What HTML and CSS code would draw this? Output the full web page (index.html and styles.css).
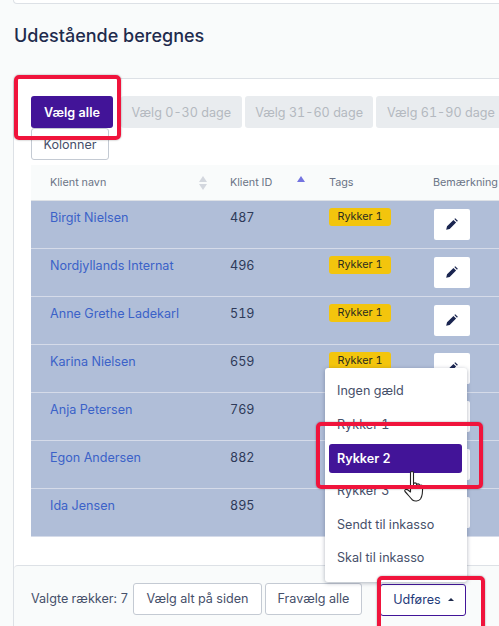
FILE: index.html

```html
<!DOCTYPE html>
<html lang="da">
<head>
  <meta charset="UTF-8" />
  <meta name="viewport" content="width=device-width, initial-scale=1" />
  <title>Udestående beregnes</title>
  <link rel="stylesheet" href="styles.css">
</head>
<body>
  <div class="top-card"></div>
  <h1>Udestående beregnes</h1>

  <div class="card">
    <div class="toolbar">
      <div class="toolbar-row">
        <button class="btn btn-primary">Vælg alle</button>
        <button class="btn btn-disabled">Vælg 0-30 dage</button>
        <button class="btn btn-disabled">Vælg 31-60 dage</button>
        <button class="btn btn-disabled">Vælg 61-90 dage</button>
      </div>
      <button class="btn btn-outline">Kolonner</button>
    </div>

    <table class="tbl">
      <thead>
        <tr>
          <th class="col-name">Klient navn<span class="sort"><i class="up"></i><i class="down"></i></span></th>
          <th class="col-id">Klient ID<span class="sort sort-asc"><i class="up"></i></span></th>
          <th class="col-tags">Tags</th>
          <th class="col-note">Bemærkning</th>
        </tr>
      </thead>
      <tbody>
        <tr>
          <td><a href="#">Birgit Nielsen</a></td><td>487</td><td><span class="tag">Rykker 1</span></td>
          <td><span class="edit"><svg viewBox="0 0 24 24"><path d="M2 22l1.500-6L14.500 5l4.500 4.500L8 20.500zM16 3.500L17.500 2 22 6.500 20.500 8z"/></svg></span></td>
        </tr>
        <tr>
          <td><a href="#">Nordjyllands Internat</a></td><td>496</td><td><span class="tag">Rykker 1</span></td>
          <td><span class="edit"><svg viewBox="0 0 24 24"><path d="M2 22l1.500-6L14.500 5l4.500 4.500L8 20.500zM16 3.500L17.500 2 22 6.500 20.500 8z"/></svg></span></td>
        </tr>
        <tr>
          <td><a href="#">Anne Grethe Ladekarl</a></td><td>519</td><td><span class="tag">Rykker 1</span></td>
          <td><span class="edit"><svg viewBox="0 0 24 24"><path d="M2 22l1.500-6L14.500 5l4.500 4.500L8 20.500zM16 3.500L17.500 2 22 6.500 20.500 8z"/></svg></span></td>
        </tr>
        <tr>
          <td><a href="#">Karina Nielsen</a></td><td>659</td><td><span class="tag">Rykker 1</span></td>
          <td><span class="edit"><svg viewBox="0 0 24 24"><path d="M2 22l1.500-6L14.500 5l4.500 4.500L8 20.500zM16 3.500L17.500 2 22 6.500 20.500 8z"/></svg></span></td>
        </tr>
        <tr>
          <td><a href="#">Anja Petersen</a></td><td>769</td><td></td>
          <td><span class="edit"></span></td>
        </tr>
        <tr>
          <td><a href="#">Egon Andersen</a></td><td>882</td><td></td>
          <td><span class="edit"></span></td>
        </tr>
        <tr>
          <td><a href="#">Ida Jensen</a></td><td>895</td><td></td>
          <td><span class="edit"></span></td>
        </tr>
      </tbody>
    </table>

    <div class="footer">
      <span class="count">Valgte rækker: 7</span>
      <button class="btn btn-outline">Vælg alt på siden</button>
      <button class="btn btn-outline">Fravælg alle</button>
      <button class="btn btn-action">Udføres<i class="caret"></i></button>
    </div>
  </div>

  <ul class="menu">
    <li>Ingen gæld</li>
    <li>Rykker 1</li>
    <li class="active">Rykker 2</li>
    <li>Rykker 3</li>
    <li>Sendt til inkasso</li>
    <li>Skal til inkasso</li>
  </ul>

  <svg class="hand" viewBox="0 0 24 34">
    <path d="M6.500 3c0-2 3-2 3 0v11c0-1.500 3-1.500 3 0v1c0-1.500 3-1.500 3 0v1c0-1.300 3-1.300 3 0 .3 5 .5 9-2 13-2 2.500-6 2.500-8 1-2.500-2.500-5-6-7.500-8.500-1-1.500 1-3 3-1.500l2.500 2z" fill="#fff" stroke="#222" stroke-width="1.100" stroke-linejoin="round"/>
    <path d="M9.500 14v4M12.500 15v3M15.500 16v2" fill="none" stroke="#222" stroke-width="1"/>
  </svg>

  <!-- markup on top of the screenshot -->
  <div class="mark mark-all"></div>
  <div class="mark mark-item"></div>
  <div class="mark mark-action"></div>
</body>
</html>
```

FILE: styles.css

```css
html, body {
  height: 100%;
}
body {
  font-family: Inter, "Liberation Sans", sans-serif;
  font-variant-numeric: tabular-nums;
  background: #f9fbfb;
  margin: 0;
  padding: 0 0 0 13px;
  box-sizing: border-box;
  color: #2e3a59;
  font-size: 12.6px;
  overflow: hidden;
  position: relative;
}
.top-card {
  height: 3px;
  width: 600px;
  background: #fff;
  border: 1px solid #dde1e6;
  border-top: none;
  border-radius: 0 0 4px 4px;
}
h1 {
  font-size: 18px;
  font-weight: 500;
  color: #1f2b4d;
  margin: 20px 0 0 1px;
  line-height: 24px;
}
.card {
  margin-top: 30px;
  width: 700px;
  height: 560px;
  background: #fff;
  border: 1px solid #dde1e6;
  border-radius: 4px 0 0 0;
}
.toolbar {
  padding: 17px 0 0 17px;
  height: 70px;
}
.toolbar-row {
  display: flex;
  gap: 3px;
}
.btn {
  font-family: inherit;
  font-variant-numeric: inherit;
  font-size: 12.6px;
  height: 32px;
  padding: 0 9.500px;
  border-radius: 3px;
  border: 1px solid transparent;
  box-sizing: border-box;
  white-space: nowrap;
  flex-shrink: 0;
}
.btn-primary {
  background: #421498;
  color: #fff;
  font-weight: 600;
  width: 82px;
  padding: 0;
  margin-right: 5px;
}
.btn-disabled {
  background: #e9ecef;
  color: #b4b9c0;
}
.btn-outline {
  background: #fff;
  border-color: #c4cad3;
  color: #46506a;
}
.toolbar .btn-outline {
  display: block;
  width: 78px;
  padding: 0;
}
.tbl {
  border-collapse: collapse;
  table-layout: fixed;
  width: 660px;
  margin: -1px 0 0 17px;
}
.tbl th {
  height: 35px;
  box-sizing: border-box;
  background: #f9fbfb;
  border-bottom: 1px solid #dde1e6;
  font-weight: 400;
  font-size: 10.8px;
  color: #6b7486;
  text-align: left;
  padding: 0;
  position: relative;
}
.col-name { width: 199px; padding-left: 19px !important; }
.col-id { width: 99px; }
.col-tags { width: 104px; }
.tbl td {
  height: 48px;
  box-sizing: border-box;
  background: #b0bed8;
  border-bottom: 1px solid #d5dbe9;
  padding: 7px 0 0;
  vertical-align: top;
  line-height: 20px;
}
.tbl td:first-child {
  padding-left: 19px;
}
.tbl a {
  color: #3b62c8;
  text-decoration: none;
}
.sort {
  position: absolute;
  top: 11px;
  left: 168px;
  display: flex;
  flex-direction: column;
  gap: 2px;
}
.sort-asc {
  left: 67px;
}
.sort i {
  display: block;
  width: 0;
  height: 0;
  border-left: 4px solid transparent;
  border-right: 4px solid transparent;
}
.sort .up {
  border-bottom: 6px solid #d3d7de;
}
.sort .down {
  border-top: 6px solid #d3d7de;
}
.sort-asc .up {
  border-bottom-color: #7474e0;
}
.tag {
  display: block;
  width: 62px;
  text-align: center;
  background: #f3c50d;
  color: #2b2b20;
  font-size: 10.8px;
  font-weight: 400;
  line-height: 18px;
  border-radius: 3px;
}
.edit {
  display: flex;
  align-items: center;
  justify-content: center;
  width: 36px;
  height: 31px;
  margin: 1px 0 0 1px;
  background: #fff;
  border-radius: 2px;
}
.edit svg {
  width: 14px;
  height: 14px;
  fill: #1a2550;
}
.footer {
  margin-top: 28px;
  height: 80px;
  background: #f9fbfb;
  border-top: 1px solid #dde1e6;
  border-radius: 4px 0 0 0;
  padding: 17px 0 0 17px;
  display: flex;
  align-items: flex-start;
  gap: 3px;
}
.count {
  line-height: 32px;
  color: #46506a;
  margin-right: 2px;
}
.footer .btn-outline {
  padding: 0 12px;
}
.footer .btn-action {
  margin: 1px 0 0 15px;
  width: 86px;
  padding: 0;
  background: #fff;
  border: 1px solid #421498;
  color: #1f3a7a;
  display: flex;
  align-items: center;
  justify-content: center;
  gap: 7px;
}
.caret {
  width: 0;
  height: 0;
  border-left: 3px solid transparent;
  border-right: 3px solid transparent;
  border-bottom: 3px solid #1f2b4d;
}
.menu {
  position: absolute;
  left: 325px;
  top: 368px;
  width: 142px;
  height: 214px;
  margin: 0;
  padding: 6px 4px 0;
  box-sizing: border-box;
  list-style: none;
  background: #fff;
  border-radius: 3px;
  box-shadow: 0 1px 4px rgba(30, 40, 70, 0.35);
  color: #46506a;
}
.menu li {
  height: 33.500px;
  line-height: 33px;
  padding-left: 8px;
}
.menu .active {
  background: #421498;
  color: #fff;
  font-weight: 600;
  height: 29px;
  line-height: 29px;
  border-radius: 3px;
  margin: 3px 1px 1px 0;
}
.mark {
  position: absolute;
  border: 4px solid #f0143c;
  border-radius: 5px;
  box-sizing: border-box;
  box-shadow: 0 0 2px rgba(0, 0, 0, 0.4);
}
.mark-all {
  left: 14px;
  top: 75px;
  width: 107px;
  height: 65px;
}
.mark-item {
  left: 316px;
  top: 422px;
  width: 167px;
  height: 67px;
}
.mark-action {
  left: 377px;
  top: 576px;
  width: 108px;
  height: 70px;
}
.hand {
  position: absolute;
  left: 404px;
  top: 470px;
  width: 24px;
  height: 34px;
}
```
